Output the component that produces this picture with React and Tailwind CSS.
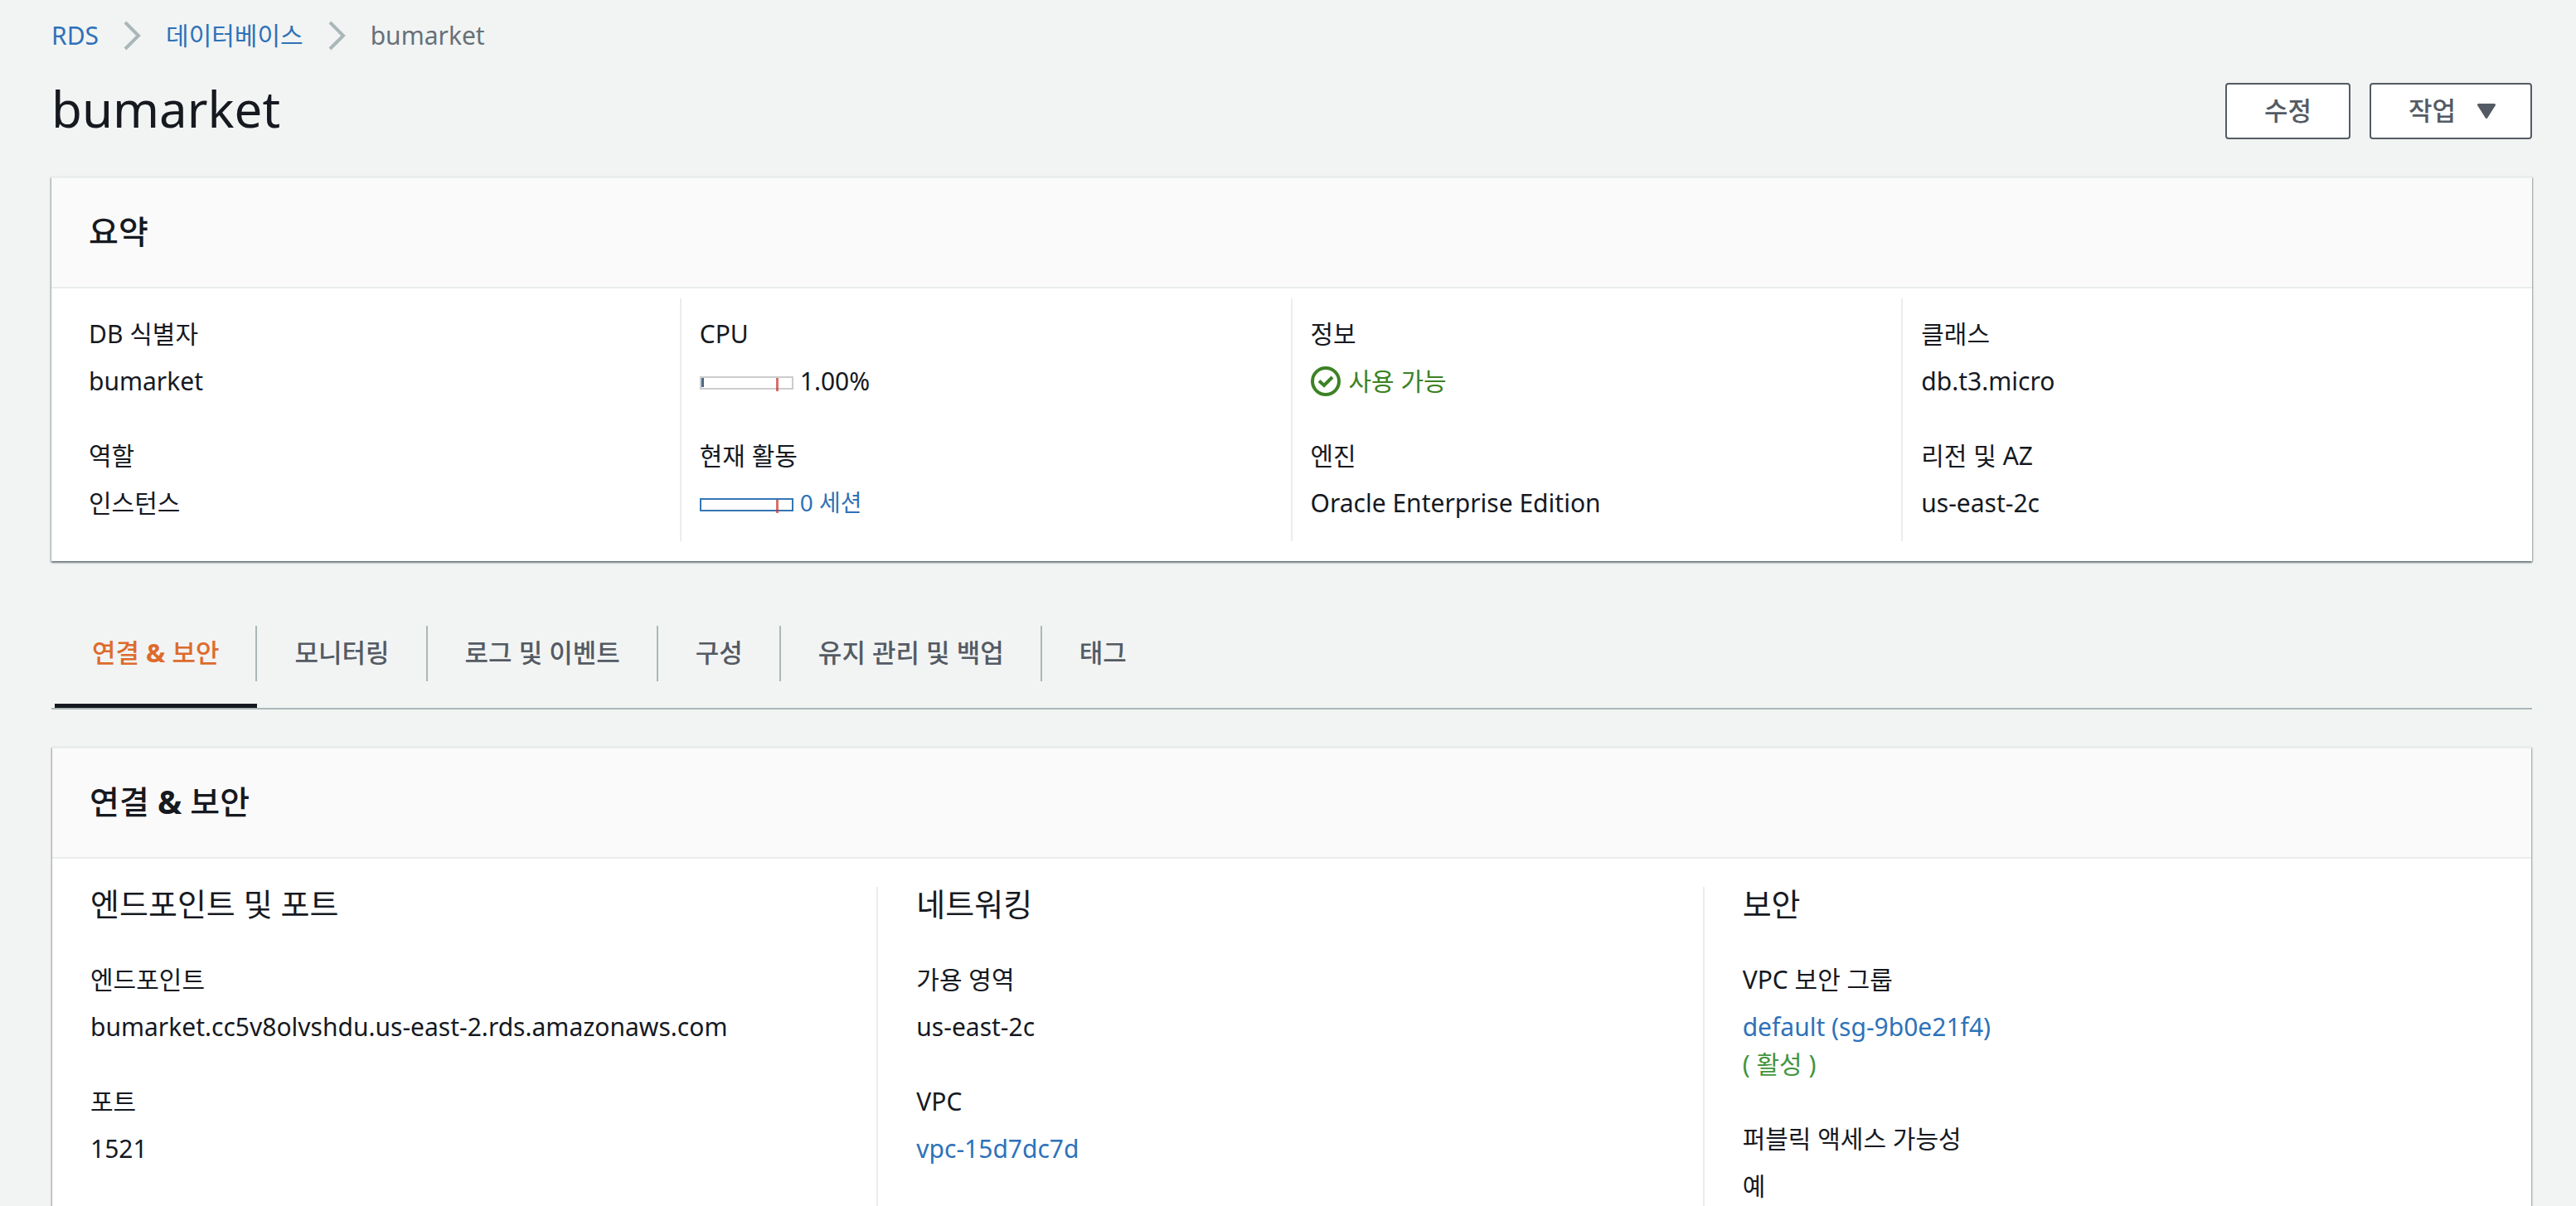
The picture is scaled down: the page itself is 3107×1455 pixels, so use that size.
import React from "react";

const Link = ({ children }) => (
  <a href="#" className="text-[#2e72b8]">
    {children}
  </a>
);

const Chevron = () => (
  <svg viewBox="0 0 21 36" className="h-9 w-[21px]" fill="none" stroke="#aab7b8" strokeWidth="4" aria-hidden="true">
    <path d="M2 2 L18 18 L2 34" />
  </svg>
);

const Breadcrumbs = () => (
  <nav aria-label="breadcrumb" className="flex items-center gap-[30px]">
    <Link>RDS</Link>
    <Chevron />
    <Link>데이터베이스</Link>
    <Chevron />
    <span className="text-[#687078]">bumarket</span>
  </nav>
);

const Button = ({ children }) => (
  <button
    type="button"
    className="flex items-center gap-[25px] rounded border-2 border-[#545b64] bg-white px-[45px] pt-[9px] pb-[10px] text-[31px] leading-[45px] font-medium text-[#545b64]"
  >
    {children}
  </button>
);

const Panel = ({ title, children, className = "" }) => (
  <section
    className={`border-t-2 border-[#eaeded] bg-white shadow-[0_2px_2px_0_rgba(0,28,36,0.4),1px_1px_2px_0_rgba(0,28,36,0.25),-1px_1px_2px_0_rgba(0,28,36,0.25)] ${className}`}
  >
    <h2 className="border-b-2 border-[#eaeded] bg-[#fafafa] px-[45px] pt-[35px] pb-[39px] text-[39px] leading-[57px] font-medium">
      {title}
    </h2>
    {children}
  </section>
);

const Field = ({ label, children }) => (
  <div>
    <dt>{label}</dt>
    <dd className="mt-3">{children}</dd>
  </div>
);

const Meter = ({ frame, filled }) => (
  <svg viewBox="0 0 113 18" className="mt-1.5 h-[18px] w-[113px]" aria-hidden="true">
    <rect x="1" y="1" width="111" height="14" fill="white" stroke={frame} strokeWidth="2" />
    {filled && <rect x="2" y="2" width="3" height="11" fill="#4c6a8e" />}
    <rect x="92" y="2" width="3" height="16" fill="#c7372f" opacity="0.72" />
  </svg>
);

const SummaryColumn = ({ children }) => (
  <dl className="flex flex-col gap-[45px] border-l-2 border-[#eaeded] px-[22px] pt-5 pb-6 first:border-transparent">
    {children}
  </dl>
);

const StatusIcon = () => (
  <svg viewBox="0 0 36 36" className="size-9" fill="none" stroke="#3c8224" strokeWidth="4" aria-hidden="true">
    <circle cx="18" cy="18" r="16" />
    <path d="M10 17.5 L16 23 L26 13" />
  </svg>
);

const Connectivity = () => (
  <>
    연결 <span className="font-bold">&amp;</span> 보안
  </>
);

const tabs = [<Connectivity />, "모니터링", "로그 및 이벤트", "구성", "유지 관리 및 백업", "태그"];

const Tabs = () => (
  <div role="tablist" className="mt-[68px] flex border-b-2 border-[#aab7b8] pl-1">
    {tabs.map((tab, i) => (
      <button
        key={i}
        type="button"
        role="tab"
        aria-selected={i === 0}
        className="group border-b-[5px] border-transparent pt-[10px] pb-[27px] text-[31px] leading-[45px] font-medium text-[#545b64] aria-selected:border-[#16191f] aria-selected:text-[#dd6b2d]"
      >
        <span className="block border-r-2 border-[#aab7b8] pt-[10px] pr-11 pb-3 pl-[45px] group-last:border-transparent">
          {tab}
        </span>
      </button>
    ))}
  </div>
);

const DetailColumn = ({ title, children }) => (
  <div className="border-l-2 border-[#eaeded] px-[46px] pb-[60px] first:border-transparent">
    <h3 className="-mt-2 text-[38px] leading-[57px]">{title}</h3>
    <dl className="mt-10 flex flex-col gap-[45px]">{children}</dl>
  </div>
);

export default function App() {
  return (
    <div className="h-screen overflow-hidden bg-[#f2f4f3] px-[62px] pr-[53px] pt-5 font-['Noto_Sans','Noto_Sans_CJK_KR',sans-serif] text-[30px] leading-[45px] text-[#16191f]">
      <Breadcrumbs />
      <header className="mt-[25px] flex items-center justify-between">
        <h1 className="pb-1.5 text-[60px] leading-[82px]">bumarket</h1>
        <div className="flex gap-[23px]">
          <Button>수정</Button>
          <Button>
            작업
            <svg viewBox="0 0 24 18" className="-mr-1 h-[18px] w-6 shrink-0" aria-hidden="true">
              <path
                d="M2.5 1.5 H21.5 L12 16.5 Z"
                fill="#545b64"
                stroke="#545b64"
                strokeWidth="3"
                strokeLinejoin="round"
              />
            </svg>
          </Button>
        </div>
      </header>

      <Panel title="요약" className="mt-[35px]">
        <div className="grid grid-cols-4 pt-3 pr-6 pb-6 pl-[21px]">
          <SummaryColumn>
            <Field label="DB 식별자">bumarket</Field>
            <Field label="역할">인스턴스</Field>
          </SummaryColumn>
          <SummaryColumn>
            <Field label="CPU">
              <span className="flex items-center gap-2">
                <Meter frame="#cccccc" filled />
                1.00%
              </span>
            </Field>
            <Field label="현재 활동">
              <a href="#" className="flex items-center gap-2 text-[28px] text-[#2e72b8]">
                <Meter frame="#3576b5" />
                0 세션
              </a>
            </Field>
          </SummaryColumn>
          <SummaryColumn>
            <Field label="정보">
              <span className="flex items-center gap-[10px] text-[#3c8224]">
                <StatusIcon />
                사용 가능
              </span>
            </Field>
            <Field label="엔진">Oracle Enterprise Edition</Field>
          </SummaryColumn>
          <SummaryColumn>
            <Field label="클래스">db.t3.micro</Field>
            <Field label="리전 및 AZ">us-east-2c</Field>
          </SummaryColumn>
        </div>
      </Panel>

      <Tabs />

      <Panel title={<Connectivity />} className="mx-px mt-[45px]">
        <div className="-ml-0.5 mr-[3px] grid grid-cols-3 pt-[34px]">
          <DetailColumn title="엔드포인트 및 포트">
            <Field label="엔드포인트">bumarket.cc5v8olvshdu.us-east-2.rds.amazonaws.com</Field>
            <Field label="포트">1521</Field>
          </DetailColumn>
          <DetailColumn title="네트워킹">
            <Field label="가용 영역">us-east-2c</Field>
            <Field label="VPC">
              <Link>vpc-15d7dc7d</Link>
            </Field>
          </DetailColumn>
          <DetailColumn title="보안">
            <Field label="VPC 보안 그룹">
              <Link>default (sg-9b0e21f4)</Link>
              <div className="text-[#42953f]">( 활성 )</div>
            </Field>
            <Field label="퍼블릭 액세스 가능성">예</Field>
          </DetailColumn>
        </div>
      </Panel>
    </div>
  );
}
